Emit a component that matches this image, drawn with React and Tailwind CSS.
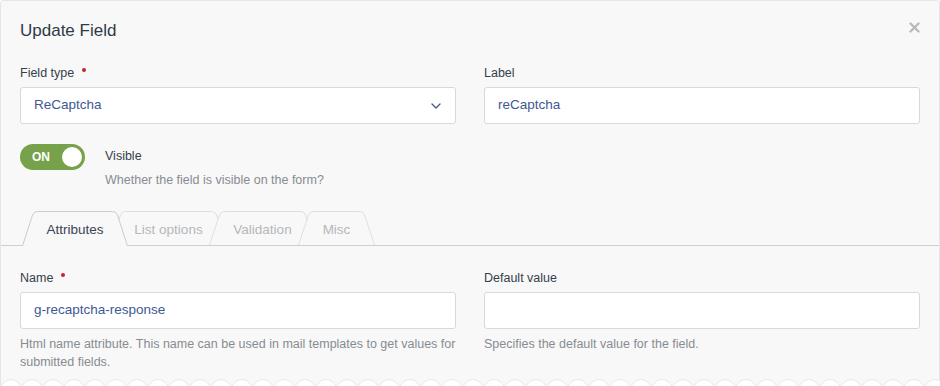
import React from "react";

const BG = "#f8f8f8";

function Tab({ label, width, active }) {
  const w = width;
  const h = active ? 35 : 34;
  const edge = `M0.5 ${h} L10.5 4 Q11.8 0.5 15.5 0.5 L${w - 15.5} 0.5 Q${w - 11.8} 0.5 ${w - 10.5} 4 L${w - 0.5} ${h}`;
  const fill = edge + " Z";
  return (
    <div
      className={
        "relative flex shrink-0 items-center justify-center -ml-[18px] first:ml-0 pt-[3px] " +
        (active ? "z-10 h-[35px] -mb-px pb-px" : "h-[34px]")
      }
      style={{ width: w }}
    >
      <svg className="absolute inset-0" width={w} height={h} viewBox={`0 0 ${w} ${h}`}>
        <path d={fill} fill={BG} stroke="none" />
        <path d={edge} fill="none" stroke={active ? "#c9cccf" : "#dcdfe1"} strokeWidth="1" />
      </svg>
      <span
        className={
          "relative text-[13.5px] leading-none " +
          (active ? "text-[#3a4451]" : "text-[#b4b7ba]")
        }
      >
        {label}
      </span>
    </div>
  );
}

function Label({ children, required }) {
  return (
    <div className="flex items-start h-[18px] text-[12.5px] leading-[18px] text-[#36404c]">
      <span>{children}</span>
      {required && <span className="ml-[8px] mt-[4px] w-[4px] h-[4px] rounded-full bg-[#c3262b]" />}
    </div>
  );
}

function Input({ value, chevron }) {
  return (
    <div className="mt-[5px] h-[37px] flex items-center justify-between bg-white border border-[#d7dadd] rounded-[3px] pl-[13px] pr-[14px] text-[13.5px] text-[#3e5894]">
      <span>{value}</span>
      {chevron && (
        <svg width="10" height="6" viewBox="0 0 10 6">
          <path d="M1 1 L5 5 L9 1" fill="none" stroke="#4b5d86" strokeWidth="1.4" strokeLinecap="round" strokeLinejoin="round" />
        </svg>
      )}
    </div>
  );
}

export default function App() {
  return (
    <div className="w-[940px] h-[386px] bg-white overflow-hidden" style={{ fontFamily: '"Liberation Sans", Arial, sans-serif' }}>
      <div className="relative h-[386px] bg-[#f8f8f8] border border-b-0 border-[#e4e7e8] rounded-t-[4px] flex flex-col">
        {/* header */}
        <div className="flex items-start justify-between pl-[19px] pr-[19px] pt-[18px] h-[63px]">
          <h1 className="text-[17px] leading-[24px] text-[#2f3a46]">Update Field</h1>
          <svg className="mt-[3px]" width="11" height="11" viewBox="0 0 11 11">
            <path d="M1.5 1.5 L9.5 9.5 M9.5 1.5 L1.5 9.5" stroke="#b7b9bb" strokeWidth="2.4" strokeLinecap="round" />
          </svg>
        </div>

        {/* first row */}
        <div className="grid grid-cols-2 gap-x-[28px] px-[19px]">
          <div>
            <Label required>Field type</Label>
            <Input value="ReCaptcha" chevron />
          </div>
          <div>
            <Label>Label</Label>
            <Input value="reCaptcha" />
          </div>
        </div>

        {/* toggle */}
        <div className="flex items-start px-[19px] mt-[20px]">
          <div className="w-[65px] h-[26px] rounded-full bg-[#78a14b] flex items-center justify-between pl-[12px] pr-[3px]">
            <span className="text-white text-[12px] font-bold leading-none">ON</span>
            <span className="w-[20px] h-[20px] rounded-full bg-white" />
          </div>
          <div className="ml-[20px]">
            <div className="text-[12.5px] leading-[18px] text-[#36404c] mt-[3px]">Visible</div>
            <div className="text-[12.5px] leading-[18px] text-[#878c92] mt-[6px]">Whether the field is visible on the form?</div>
          </div>
        </div>

        {/* tabs */}
        <div className="flex items-end pl-[21px] border-b border-[#cdd0d3] mt-[22px]">
          <Tab label="Attributes" width={106} active />
          <Tab label="List options" width={117} />
          <Tab label="Validation" width={107} />
          <Tab label="Misc" width={77} />
        </div>

        {/* second row */}
        <div className="grid grid-cols-2 gap-x-[28px] px-[19px] mt-[23px]">
          <div>
            <Label required>Name</Label>
            <Input value="g-recaptcha-response" />
            <div className="mt-[6px] text-[12.5px] leading-[18px] text-[#878c92]">
              <div className="whitespace-nowrap">Html name attribute. This name can be used in mail templates to get values for</div>
              <div>submitted fields.</div>
            </div>
          </div>
          <div>
            <Label>Default value</Label>
            <Input value="" />
            <div className="mt-[6px] text-[12.5px] leading-[18px] text-[#878c92]">Specifies the default value for the field.</div>
          </div>
        </div>

        {/* scalloped edge */}
        <div className="absolute left-[-1px] right-[-1px] bottom-0 h-[7px] overflow-hidden flex">
          {Array.from({ length: 46 }).map((_, i) => (
            <span key={i} className="shrink-0 w-[22px] h-[22px] rounded-full bg-white border border-[#e6e8e9] -mr-px" />
          ))}
        </div>
      </div>
    </div>
  );
}
